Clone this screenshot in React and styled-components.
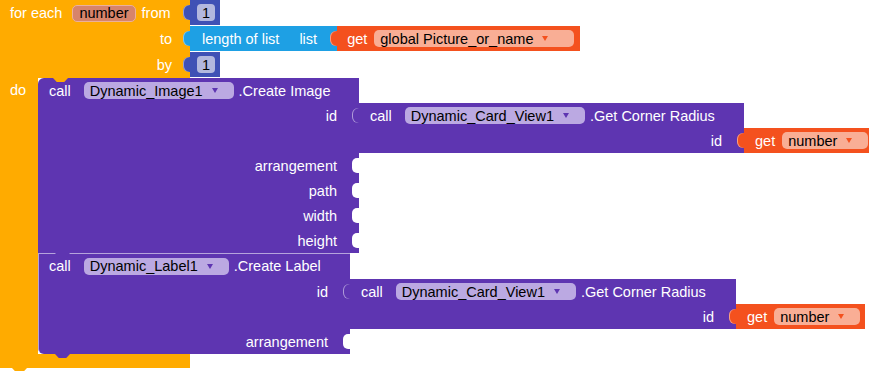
import React from 'react'
import styled, { createGlobalStyle } from 'styled-components'

const ORANGE = '#ffab00'
const PURPLE = '#5e35b1'
const INDIGO = '#3f51b5'
const SKY = '#1ea0e4'
const RED = '#f4511e'

const GlobalStyle = createGlobalStyle`
  html, body { margin: 0; background: #fff; }
  body {
    font-family: "Liberation Sans", Arial, sans-serif;
    font-size: 14.5px;
    color: #fff;
  }
`

const Workspace = styled.div`
  width: 869px;
  height: 371px;
  overflow: hidden;
  background: #fff;
`

const ForEach = styled.div`
  display: flex;
  flex-direction: column;
  align-items: flex-start;
`

const HeaderRow = styled.div`
  display: flex;
  align-items: flex-start;
  height: 26px;
`

const HeaderCell = styled.div`
  width: 190px;
  height: 26px;
  box-sizing: border-box;
  flex-shrink: 0;
  background: ${ORANGE};
  display: flex;
  align-items: center;
  justify-content: ${p => (p.$start ? 'flex-start' : 'flex-end')};
  padding: 0 18px 0 10px;
  white-space: nowrap;
`

const VarName = styled.span`
  display: inline-flex;
  align-items: center;
  height: 17px;
  box-sizing: border-box;
  margin: 0 6px 0 10px;
  padding: 0 6px;
  border-radius: 5px;
  border: 1px solid #ebb09b;
  background: #d7846a;
  color: #000;
`

const Value = styled.div`
  position: relative;
  flex-shrink: 0;
  height: 25px;
  box-sizing: border-box;
  display: flex;
  align-items: center;
  white-space: nowrap;
  background: ${p => p.$color};
  padding: 0 ${p => p.$pr}px 0 ${p => p.$pl}px;

  &::before {
    content: '';
    position: absolute;
    left: -7px;
    top: 5px;
    width: 8px;
    height: 15px;
    background: ${p => p.$color};
    border-radius: 6px 0 0 6px;
    box-shadow: inset 1px 0 0 rgba(255, 255, 255, 0.45);
  }
`

const NumPill = styled.span`
  display: inline-flex;
  align-items: center;
  height: 17px;
  padding: 0 5px;
  border-radius: 4px;
  background: #b3b8de;
  color: #000;
`

const Gap = styled.span`
  margin-left: ${p => p.$w}px;
`

const Dropdown = styled.span`
  display: inline-flex;
  align-items: center;
  height: 17px;
  box-sizing: border-box;
  padding: 0 ${p => p.$pr || 16}px 0 6px;
  border-radius: 5px;
  background: ${p => p.$bg};
  color: #000;

  &::after {
    content: '';
    margin-left: 9px;
    border-left: 3px solid transparent;
    border-right: 3px solid transparent;
    border-top: 5px solid ${p => p.$arrow};
  }
`

const DoRow = styled.div`
  display: flex;
  align-items: stretch;
`

const DoCell = styled.div`
  width: 38px;
  flex-shrink: 0;
  box-sizing: border-box;
  background: ${ORANGE};
  padding-left: 10px;
  line-height: 25px;
`

const Stack = styled.div`
  position: relative;
  display: flex;
  flex-direction: column;

  &::before {
    content: '';
    position: absolute;
    z-index: 2;
    left: 15px;
    top: 0;
    width: 15px;
    height: 4px;
    background: ${ORANGE};
    clip-path: polygon(0 0, 100% 0, 75% 100%, 25% 100%);
  }
`

const Statement = styled.div`
  position: relative;
  width: ${p => p.$w}px;
  background: ${PURPLE};
  display: flex;
  flex-direction: column;
  border-radius: ${p => p.$radius};
  box-shadow: ${p => (p.$lit ? 'inset 1px 1px 0 rgba(255,255,255,0.55)' : 'none')};

  &::after {
    content: '';
    position: absolute;
    z-index: 1;
    left: 17px;
    bottom: -4px;
    width: 15px;
    height: 4px;
    background: ${PURPLE};
    clip-path: polygon(0 0, 100% 0, 75% 100%, 25% 100%);
  }
`

const CallBlock = styled.div`
  position: relative;
  flex-shrink: 0;
  width: ${p => p.$w}px;
  background: ${PURPLE};
  display: flex;
  flex-direction: column;

  &::before {
    content: '';
    position: absolute;
    left: -7px;
    top: 5px;
    width: 8px;
    height: 15px;
    background: ${PURPLE};
    border-radius: 6px 0 0 6px;
    box-shadow: inset 1px 0 0 rgba(255, 255, 255, 0.5);
  }
`

const TopRow = styled.div`
  display: flex;
  align-items: center;
  height: ${p => p.$h || 25}px;
  padding-left: 11px;
  white-space: nowrap;
`

const Call = styled.span`
  margin-right: 13px;
`

const Method = styled.span`
  margin-left: 5px;
`

const InputRow = styled.div`
  display: flex;
  align-items: flex-start;
`

const InputCell = styled.div`
  flex: 0 0 100%;
  height: 25px;
  display: flex;
  align-items: center;
  justify-content: flex-end;
  white-space: nowrap;
`

const Socket = styled.span`
  width: 7px;
  height: 15px;
  margin-left: 15px;
  border-radius: 5px 0 0 5px;
  background: ${p => (p.$empty ? '#fff' : 'transparent')};
`

const Foot = styled.div`
  position: relative;
  width: 190px;
  height: 14px;
  background: ${ORANGE};

  &::after {
    content: '';
    position: absolute;
    left: 12px;
    bottom: -4px;
    width: 15px;
    height: 4px;
    background: ${ORANGE};
    clip-path: polygon(0 0, 100% 0, 75% 100%, 25% 100%);
  }
`

const CompPill = ({ children }) => (
  <Dropdown $bg="#bba9e2" $arrow={PURPLE}>{children}</Dropdown>
)

const VarPill = ({ children, pr }) => (
  <Dropdown $bg="#f9ae95" $arrow={RED} $pr={pr}>{children}</Dropdown>
)

const Number = ({ n }) => (
  <Value $color={INDIGO} $pl={7} $pr={5}>
    <NumPill>{n}</NumPill>
  </Value>
)

const GetVar = ({ name }) => (
  <Value $color={RED} $pl={11} $pr={5}>
    get<Gap $w={7} />
    <VarPill>{name}</VarPill>
  </Value>
)

const Input = ({ label, empty }) => (
  <InputCell>
    {label}
    <Socket $empty={empty} />
  </InputCell>
)

const CornerRadius = ({ w }) => (
  <CallBlock $w={w}>
    <TopRow>
      <Call>call</Call>
      <CompPill>Dynamic_Card_View1</CompPill>
      <Method>.Get Corner Radius</Method>
    </TopRow>
    <InputRow>
      <Input label="id" />
      <GetVar name="number" />
    </InputRow>
  </CallBlock>
)

export default function App() {
  return (
    <Workspace>
      <GlobalStyle />
      <ForEach>
        <HeaderRow>
          <HeaderCell $start>
            for each
            <VarName>number</VarName>
            from
          </HeaderCell>
          <Number n="1" />
        </HeaderRow>
        <HeaderRow>
          <HeaderCell>to</HeaderCell>
          <Value $color={SKY} $pl={12} $pr={20}>
            length of list<Gap $w={20} />list
          </Value>
          <Value $color={RED} $pl={10} $pr={6}>
            get<Gap $w={7} />
            <VarPill pr={26}>global Picture_or_name</VarPill>
          </Value>
        </HeaderRow>
        <HeaderRow>
          <HeaderCell>by</HeaderCell>
          <Number n="1" />
        </HeaderRow>

        <DoRow>
          <DoCell>do</DoCell>
          <Stack>
            <Statement $w={321} $radius="6px 0 0 0">
              <TopRow>
                <Call>call</Call>
                <CompPill>Dynamic_Image1</CompPill>
                <Method>.Create Image</Method>
              </TopRow>
              <InputRow>
                <Input label="id" />
                <CornerRadius w={385} />
              </InputRow>
              <InputRow><Input label="arrangement" empty /></InputRow>
              <InputRow><Input label="path" empty /></InputRow>
              <InputRow><Input label="width" empty /></InputRow>
              <InputRow><Input label="height" empty /></InputRow>
            </Statement>
            <Statement $w={312} $radius="0 0 0 6px" $lit>
              <TopRow $h={26}>
                <Call>call</Call>
                <CompPill>Dynamic_Label1</CompPill>
                <Method>.Create Label</Method>
              </TopRow>
              <InputRow>
                <Input label="id" />
                <CornerRadius w={386} />
              </InputRow>
              <InputRow><Input label="arrangement" empty /></InputRow>
            </Statement>
          </Stack>
        </DoRow>
        <Foot />
      </ForEach>
    </Workspace>
  )
}
